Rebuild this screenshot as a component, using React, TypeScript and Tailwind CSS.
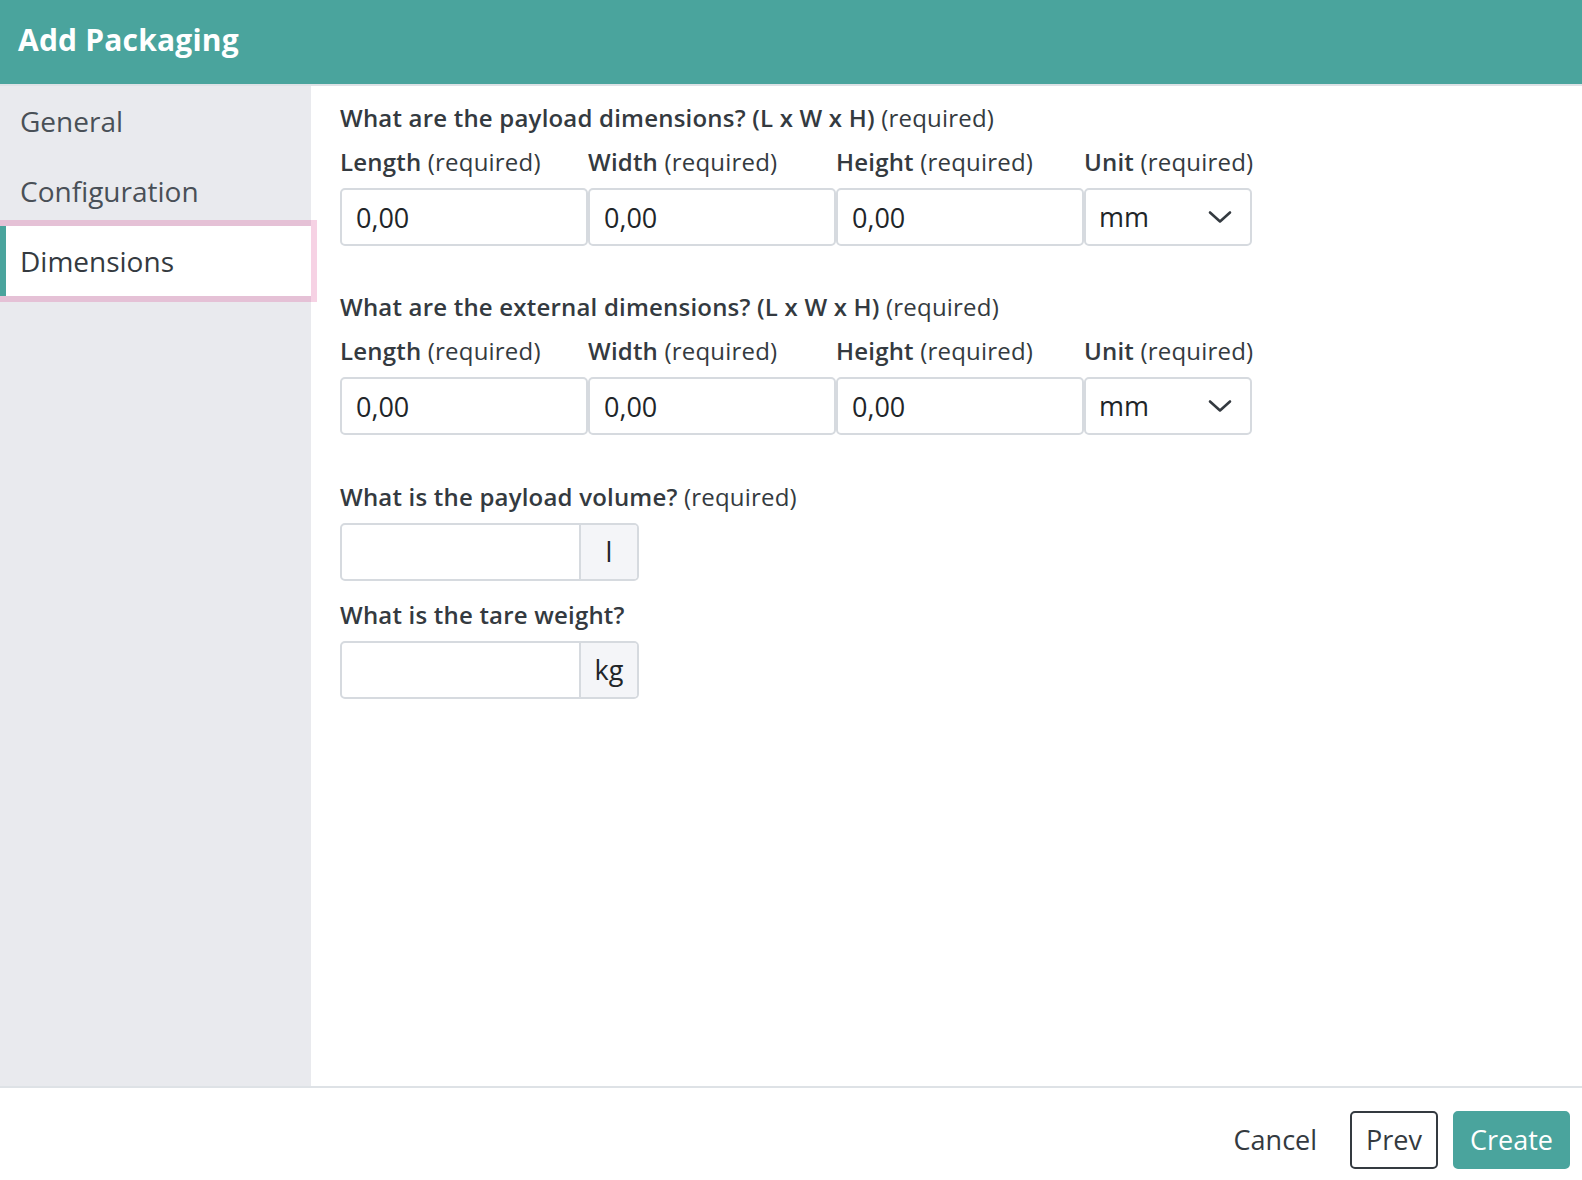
import React from "react";

// ---------- data ----------

const NAV_ITEMS = ["General", "Configuration", "Dimensions"];
const ACTIVE = "Dimensions";

const DIM_FIELDS = ["Length", "Width", "Height"];

// ---------- parts ----------

function ChevronDown() {
  return (
    <svg width="24" height="14" viewBox="0 0 24 14" fill="none" aria-hidden="true">
      <path d="M2 2.5 12 11.5 22 2.5" stroke="#343a40" strokeWidth="2.6" strokeLinecap="round" strokeLinejoin="round" />
    </svg>
  );
}

function FieldLabel({ name }: { name: string }) {
  return (
    <label className="block h-[36px] text-[24px] leading-[36px] tracking-[0.2px] text-[#343a40] whitespace-nowrap">
      <span className="font-semibold">{name}</span> (required)
    </label>
  );
}

function DimensionRow({ title }: { title: string }) {
  return (
    <section>
      <h2 className="h-[36px] text-[24px] leading-[36px] tracking-[0.2px] text-[#343a40] whitespace-nowrap">
        <span className="font-semibold">{title}</span> (required)
      </h2>
      <div className="mt-[8px] flex">
        {DIM_FIELDS.map((f) => (
          <div key={f} className="w-[248px]">
            <FieldLabel name={f} />
            <input
              type="text"
              defaultValue="0,00"
              className="mt-[8px] block h-[58px] w-full rounded-[5px] border-2 border-[#d6dadf] bg-white px-[14px] text-[27px] text-[#212529] outline-none"
            />
          </div>
        ))}
        <div className="w-[168px]">
          <FieldLabel name="Unit" />
          <div className="mt-[8px] flex h-[58px] items-center justify-between rounded-[5px] border-2 border-[#d6dadf] bg-white pl-[13px] pr-[18px] text-[27px] text-[#212529]">
            <span>mm</span>
            <ChevronDown />
          </div>
        </div>
      </div>
    </section>
  );
}

function AddonInput({ unit }: { unit: string }) {
  return (
    <div className="mt-[8px] flex h-[58px] w-[299px] overflow-hidden rounded-[5px] border-2 border-[#d6dadf] bg-white">
      <input type="text" className="min-w-0 flex-1 px-[14px] text-[27px] outline-none" />
      <span className="flex min-w-[58px] items-center justify-center border-l-2 border-[#d6dadf] bg-[#f4f5f8] px-[12px] text-[27px] text-[#212529]">
        {unit}
      </span>
    </div>
  );
}

// ---------- page ----------

export default function App() {
  return (
    <div className="flex h-[1180px] w-full flex-col bg-white font-['Open_Sans',sans-serif] text-[#343a40]">
      {/* header */}
      <header className="flex h-[86px] shrink-0 items-center border-b-2 border-[#dee2e6] bg-[#4aa49d] px-[18px] pb-[5px]">
        <h1 className="text-[30px] font-bold tracking-[0.2px] text-white">Add Packaging</h1>
      </header>

      <div className="flex min-h-0 flex-1">
        {/* sidebar */}
        <nav className="w-[311px] shrink-0 bg-[#e9eaee]">
          {NAV_ITEMS.map((item) =>
            item === ACTIVE ? (
              <div
                key={item}
                className="relative flex h-[70px] items-center bg-white pl-[20px] text-[28px] text-[#343a40] ring-[6px] ring-[rgba(214,51,132,0.22)]"
              >
                <span className="absolute left-0 top-0 h-full w-[6px] bg-[#4aa49d]" />
                {item}
              </div>
            ) : (
              <div key={item} className="flex h-[70px] items-center pl-[20px] text-[28px] text-[#495057]">
                {item}
              </div>
            )
          )}
        </nav>

        {/* content */}
        <main className="flex-1 pl-[29px] pt-[14px]">
          <DimensionRow title="What are the payload dimensions? (L x W x H)" />
          <div className="mt-[43px]">
            <DimensionRow title="What are the external dimensions? (L x W x H)" />
          </div>

          <section className="mt-[44px]">
            <h2 className="h-[36px] text-[24px] leading-[36px] tracking-[0.2px] text-[#343a40]">
              <span className="font-semibold">What is the payload volume?</span> (required)
            </h2>
            <AddonInput unit="l" />
          </section>

          <section className="mt-[16px]">
            <h2 className="h-[36px] text-[24px] font-semibold leading-[36px] tracking-[0.2px] text-[#343a40]">
              What is the tare weight?
            </h2>
            <AddonInput unit="kg" />
          </section>
        </main>
      </div>

      {/* footer */}
      <footer className="flex h-[94px] shrink-0 items-start justify-end gap-[15px] border-t-2 border-[#dee2e6] pr-[12px] pt-[23px]">
        <button type="button" className="h-[58px] px-[16px] pr-[18px] text-[27px] text-[#343a40]">
          Cancel
        </button>
        <button
          type="button"
          className="h-[58px] rounded-[5px] border-2 border-[#343a40] px-[14px] text-[27px] text-[#343a40]"
        >
          Prev
        </button>
        <button
          type="button"
          className="h-[58px] rounded-[5px] border-2 border-[#4aa49d] bg-[#4aa49d] px-[15px] text-[27px] text-white"
        >
          Create
        </button>
      </footer>
    </div>
  );
}
